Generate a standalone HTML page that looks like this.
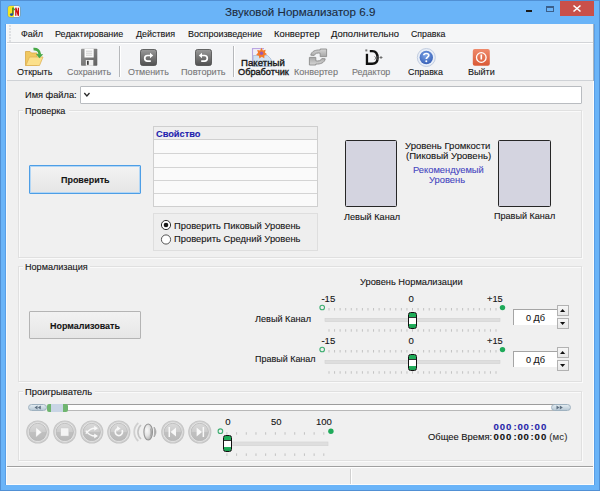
<!DOCTYPE html>
<html><head><meta charset="utf-8"><style>
html,body{margin:0;padding:0;width:600px;height:491px;overflow:hidden;background:#f0f0f0;}
.t{position:absolute;font-family:"Liberation Sans",sans-serif;white-space:pre;-webkit-text-stroke:0.1px currentColor;}
.a{position:absolute;box-sizing:border-box;}
svg{position:absolute;overflow:visible;}
</style></head><body>
<!-- window frame -->
<div class="a" style="left:0;top:0;width:600px;height:491px;background:#6ab4f8;border:1px solid #5190d4;"></div>
<div class="a" style="left:5px;top:24px;width:1px;height:461px;background:#5a9fe6;"></div><div class="a" style="left:594px;top:24px;width:1px;height:461px;background:#5a9fe6;"></div>
<!-- client -->
<div class="a" style="left:6px;top:24px;width:588px;height:461px;background:#f0f0f0;"></div>
<div class="a" style="left:6px;top:24px;width:1px;height:461px;background:#fbfbfb;"></div>
<div class="a" style="left:593px;top:24px;width:1px;height:57px;background:#a8b4c0;"></div><div class="a" style="left:593px;top:81px;width:1px;height:404px;background:#fdfdfd;"></div><div class="a" style="left:6px;top:484px;width:588px;height:1px;background:#fbfbfb;"></div>
<!-- app icon -->
<div class="a" style="left:8px;top:6px;width:12px;height:11px;border-radius:2px;background:linear-gradient(90deg,#f4e418 0,#f8ec30 50%,#f6f6f6 50%);box-shadow:0 0 0 0.5px rgba(150,120,40,0.5);"></div>
<svg style="left:8px;top:6px" width="12" height="11"><path d="M4.9 1.5 L4.9 8.3" stroke="#264a20" stroke-width="1.1"/><ellipse cx="3.6" cy="8.6" rx="1.7" ry="1.3" fill="#1f4ea0"/><path d="M5 1.8 L6.6 4.2" stroke="#3a9a3a" stroke-width="1.5"/><path d="M7.8 9.8 L7.8 1.8 L10.4 9.8 L10.4 1.8" stroke="#cc1010" stroke-width="1.25" fill="none"/></svg>
<!-- window buttons -->
<div class="a" style="left:526px;top:10px;width:6px;height:2px;background:#1a1a1a;"></div>
<div class="a" style="left:546px;top:6px;width:8px;height:6px;border:1px solid #3b5f8a;border-top-width:2px;"></div>
<div class="a" style="left:560px;top:1px;width:34px;height:15px;background:#c9504a;"></div>
<svg style="left:560px;top:1px" width="34" height="15"><path d="M13.5 4.5 L20.5 10.5 M20.5 4.5 L13.5 10.5" stroke="#fff" stroke-width="1.6"/></svg>

<!-- menubar -->
<div class="a" style="left:7px;top:24px;width:586px;height:18px;background:#f5f6f7;"></div>
<svg style="left:9px;top:24px" width="3" height="18"><g fill="#9aa0a8"><rect x="0.5" y="1.5" width="1" height="1"/><rect x="0.5" y="4.5" width="1" height="1"/><rect x="0.5" y="7.5" width="1" height="1"/><rect x="0.5" y="10.5" width="1" height="1"/><rect x="0.5" y="13.5" width="1" height="1"/><rect x="0.5" y="16.5" width="1" height="1"/></g></svg>
<div class="a" style="left:7px;top:42px;width:586px;height:1px;background:#d2d4d8;"></div>
<div class="a" style="left:7px;top:43px;width:586px;height:1px;background:#ffffff;"></div>
<!-- toolbar -->
<div class="a" style="left:7px;top:44px;width:586px;height:36px;background:#f3f4f6;"></div>
<div class="a" style="left:7px;top:80px;width:586px;height:1px;background:#cfd2d6;"></div>
<div class="a" style="left:118.6px;top:46px;width:1.2px;height:31px;background:#b6b8bb;"></div>
<div class="a" style="left:119.8px;top:46px;width:1px;height:31px;background:#fff;"></div>
<div class="a" style="left:232.6px;top:46px;width:1.2px;height:31px;background:#b6b8bb;"></div>
<div class="a" style="left:233.8px;top:46px;width:1px;height:31px;background:#fff;"></div>

<!-- filename box -->
<div class="a" style="left:80px;top:85.5px;width:501.5px;height:18.5px;background:#fff;border:1px solid #b9bcc0;border-radius:1px;"></div>
<svg style="left:80px;top:85px" width="12" height="18"><path d="M4.3 8 L6.9 11 L9.5 8" stroke="#2a2a2a" stroke-width="1.3" fill="none"/></svg>

<!-- group boxes -->
<div class="a" style="left:18px;top:110px;width:563.5px;height:148px;border:1px solid #e0e0e0;box-shadow:inset 1px 1px 0 #fafafa, 1px 1px 0 #fafafa;"></div>
<div class="a" style="left:23px;top:104px;width:46px;height:12px;background:#f0f0f0;"></div>
<div class="a" style="left:18px;top:266px;width:563.5px;height:116px;border:1px solid #e0e0e0;box-shadow:inset 1px 1px 0 #fafafa, 1px 1px 0 #fafafa;"></div>
<div class="a" style="left:23px;top:260px;width:67px;height:12px;background:#f0f0f0;"></div>
<div class="a" style="left:18px;top:391px;width:563.5px;height:70px;border:1px solid #e0e0e0;box-shadow:inset 1px 1px 0 #fafafa, 1px 1px 0 #fafafa;"></div>
<div class="a" style="left:23px;top:385px;width:72px;height:12px;background:#f0f0f0;"></div>

<!-- Проверить button -->
<div class="a" style="left:29px;top:165px;width:112px;height:29px;border:1px solid #4d9ee6;background:linear-gradient(#f3f3f3,#e5e5e5);border-radius:1px;box-shadow:inset 0 0 0 1px #b2d6f5;"></div>
<!-- table -->
<div class="a" style="left:152.5px;top:126px;width:165.5px;height:81px;border:1px solid #cfcfcf;background:#fafafa;"></div>
<div class="a" style="left:153.5px;top:127px;width:163.5px;height:12.5px;background:#efefef;"></div>
<div class="a" style="left:153.5px;top:139px;width:163.5px;height:1px;background:#d0d0d0;"></div>
<div class="a" style="left:153.5px;top:153px;width:163.5px;height:1px;background:#d4d4d4;"></div>
<div class="a" style="left:153.5px;top:166.5px;width:163.5px;height:1px;background:#d4d4d4;"></div>
<div class="a" style="left:153.5px;top:180px;width:163.5px;height:1px;background:#d4d4d4;"></div>
<div class="a" style="left:153.5px;top:193px;width:163.5px;height:1px;background:#d4d4d4;"></div>
<!-- radio group -->
<div class="a" style="left:152.5px;top:213px;width:165.5px;height:37.5px;border:1px solid #dedede;background:#eeeeee;"></div>
<svg style="left:160px;top:219px" width="14" height="28">
 <circle cx="6" cy="6" r="4.6" fill="#fff" stroke="#333" stroke-width="1"/><circle cx="6" cy="6" r="2.3" fill="#1a1a1a"/>
 <circle cx="6" cy="20.5" r="4.6" fill="#fff" stroke="#555" stroke-width="1"/>
</svg>
<!-- meters -->
<div class="a" style="left:345px;top:139.6px;width:52px;height:67.2px;border:1.4px solid #262626;border-radius:1.5px;background:#d4d4e0;"></div>
<div class="a" style="left:498px;top:139.6px;width:52.5px;height:67.2px;border:1.4px solid #262626;border-radius:1.5px;background:#d4d4e0;"></div>

<!-- Нормализовать button -->
<div class="a" style="left:29px;top:311px;width:112px;height:28px;border:1px solid #b4b4b4;background:linear-gradient(#f2f2f2,#e6e6e6);border-radius:1px;"></div>

<!-- status bar -->
<div class="a" style="left:7px;top:466px;width:586px;height:1px;background:#a0a0a0;"></div>
<div class="a" style="left:7px;top:467px;width:586px;height:1px;background:#fff;"></div>
<div class="a" style="left:350px;top:469px;width:1px;height:15px;background:#d0d0d0;"></div>
<div class="a" style="left:351px;top:469px;width:1px;height:15px;background:#fff;"></div>
<svg style="left:24px;top:46px" width="22" height="22">
<path d="M1.5 5.5 L6 5.5 L7.5 7 L13 7 L13 19.5 L1.5 19.5Z" fill="#f0c860" stroke="#d8a848" stroke-width="0.8"/>
<path d="M1.8 19.5 L5.5 11 L19 11 L15.5 19.5Z" fill="#fbe08c" stroke="#e0b458" stroke-width="0.8"/>
<path d="M9.5 3.2 C13 2.8 15.6 4.6 15.8 8.5" stroke="#46a846" stroke-width="2.8" fill="none"/>
<path d="M12 8 L19.2 8.2 L15.4 12.2Z" fill="#46a846"/>
</svg>
<svg style="left:80px;top:48px" width="19" height="19">
<defs><linearGradient id="fg" x1="0" y1="0" x2="1" y2="1"><stop offset="0" stop-color="#9a9a9a"/><stop offset="1" stop-color="#5e5e5e"/></linearGradient></defs>
<path d="M1 1.6 Q1 0.8 1.8 0.8 L16.5 0.8 Q17.3 0.8 17.3 1.6 L17.3 17 Q17.3 17.8 16.5 17.8 L1.8 17.8 Q1 17.8 1 17Z" fill="url(#fg)"/>
<rect x="4.5" y="0.8" width="9.2" height="8.7" fill="#fcfcfc"/>
<path d="M6 3.2 H12.2 M6 5.2 H12.2 M6 7.2 H12.2" stroke="#a8a8a8" stroke-width="0.55"/>
<rect x="5.8" y="12" width="7.5" height="5.8" fill="#f0f0f0"/>
<rect x="7" y="12.8" width="1.7" height="4" fill="#3c3c3c"/>
</svg>
<svg style="left:140px;top:49px" width="17" height="17">
<defs><linearGradient id="ug140" x1="0" y1="0" x2="0" y2="1"><stop offset="0" stop-color="#9a9a9a"/><stop offset="1" stop-color="#505050"/></linearGradient></defs>
<rect x="0.5" y="0.5" width="16" height="16" rx="2" fill="url(#ug140)" stroke="#4a4a4a" stroke-width="0.8"/>
<g ><path d="M10.5 6.5 L7.5 6.5 A2.8 2.8 0 0 0 7.5 12.1 L10.8 12.1" stroke="#fff" stroke-width="1.7" fill="none"/>
<path d="M10 3.8 L13.2 6.5 L10 9.2Z" fill="#fff"/></g>
</svg>
<svg style="left:195px;top:49px" width="17" height="17">
<defs><linearGradient id="ug195" x1="0" y1="0" x2="0" y2="1"><stop offset="0" stop-color="#9a9a9a"/><stop offset="1" stop-color="#505050"/></linearGradient></defs>
<rect x="0.5" y="0.5" width="16" height="16" rx="2" fill="url(#ug195)" stroke="#4a4a4a" stroke-width="0.8"/>
<g transform="translate(17,0) scale(-1,1)"><path d="M10.5 6.5 L7.5 6.5 A2.8 2.8 0 0 0 7.5 12.1 L10.8 12.1" stroke="#fff" stroke-width="1.7" fill="none"/>
<path d="M10 3.8 L13.2 6.5 L10 9.2Z" fill="#fff"/></g>
</svg>
<svg style="left:251px;top:47px" width="22" height="20">
<path d="M1.6 18 V1.6 H13" stroke="#bba6e2" stroke-width="1.3" fill="none"/>
<rect x="2.3" y="2.3" width="10" height="6" fill="#f1eef8"/>
<path d="M2.2 8.5 H16.5 L20 12 V19.5 H2.2Z" fill="#d0e1f3" stroke="#a9bcd6" stroke-width="0.8"/>
<g transform="translate(10.5,6.2) scale(1.08)"><path d="M0 -5 L1.3 -2.6 L3.9 -3.3 L3.2 -0.7 L5.2 1 L2.7 2 L2.6 4.6 L0.2 3.4 L-2 5 L-2.4 2.4 L-5 1.6 L-3.2 -0.4 L-4 -3 L-1.3 -2.6Z" fill="#f47a2a"/><circle r="1.6" fill="#9a5ab0"/></g>
</svg>
<svg style="left:308px;top:48px" width="20" height="18">
<defs><linearGradient id="cg" x1="0" y1="0" x2="0" y2="1"><stop offset="0" stop-color="#d6d6d6"/><stop offset="1" stop-color="#a6a6a6"/></linearGradient></defs>
<g id="carr"><path d="M2.8 7.2 C3.2 3.4 7.6 1.6 12.2 2 L12.2 1 L18.6 1 L18.6 8.6 L12.2 8.6 L12.2 5.2 C9.4 4.6 6.9 5.4 6.2 7.4 Z" fill="url(#cg)" stroke="#8c8c8c" stroke-width="0.9" stroke-linejoin="round"/></g>
<g transform="rotate(180 10 9)"><path d="M2.8 7.2 C3.2 3.4 7.6 1.6 12.2 2 L12.2 1 L18.6 1 L18.6 8.6 L12.2 8.6 L12.2 5.2 C9.4 4.6 6.9 5.4 6.2 7.4 Z" fill="url(#cg)" stroke="#8c8c8c" stroke-width="0.9" stroke-linejoin="round"/></g>
</svg>
<svg style="left:364px;top:48px" width="20" height="19">
<rect x="1.3" y="1.4" width="2" height="2" fill="#777"/>
<rect x="1.8" y="5.8" width="2.3" height="11.2" fill="#111"/>
<path d="M5.8 3.1 L8.2 3.1 C12.6 3.1 13.6 6.4 13.6 10 C13.6 14 11.8 15.8 8.2 15.8 L3.2 15.8" stroke="#111" stroke-width="2.4" fill="none"/>
<path d="M10.5 8.5 L14 11.5 M14 8.5 L10.5 11.5 M15.5 9.5 H18.5 M17 8 V11" stroke="#666" stroke-width="0.9"/>
</svg>
<svg style="left:416px;top:47px" width="21" height="21">
<defs><radialGradient id="hg" cx="45%" cy="35%" r="65%"><stop offset="0" stop-color="#79a2e6"/><stop offset="1" stop-color="#3a62b8"/></radialGradient></defs>
<circle cx="10.3" cy="10.5" r="9" fill="#e8eef8" stroke="#c2cde0" stroke-width="1"/>
<circle cx="10.3" cy="10.5" r="6.7" fill="url(#hg)"/>
<path d="M7.8 8.3 C7.8 5.9 12.8 5.9 12.8 8.3 C12.8 10 10.3 10.2 10.3 12" stroke="#fff" stroke-width="1.7" fill="none"/>
<circle cx="10.3" cy="14.2" r="1" fill="#fff"/>
</svg>
<svg style="left:472px;top:48px" width="19" height="19">
<defs><linearGradient id="eg" x1="0" y1="0" x2="0" y2="1"><stop offset="0" stop-color="#ef8a6c"/><stop offset="1" stop-color="#da5a36"/></linearGradient></defs>
<rect x="0.8" y="1" width="17" height="16.7" rx="2" fill="url(#eg)"/>
<circle cx="9.3" cy="9.5" r="4.8" stroke="#fff" stroke-width="1.3" fill="none"/>
<rect x="8.5" y="6.5" width="1.6" height="5" fill="#fff"/>
</svg><svg style="left:0;top:0" width="600" height="491"><circle cx="322.2" cy="307.5" r="2.3" fill="none" stroke="#3fae72" stroke-width="1.1"/><circle cx="502.5" cy="307.6" r="2.7" fill="#1faa5a"/><rect x="328.50" y="308" width="1" height="2.5" fill="#c2c2c2"/><rect x="328.50" y="329.2" width="1" height="2.5" fill="#c2c2c2"/><rect x="334.07" y="308" width="1" height="2.5" fill="#c2c2c2"/><rect x="334.07" y="329.2" width="1" height="2.5" fill="#c2c2c2"/><rect x="339.63" y="308" width="1" height="2.5" fill="#c2c2c2"/><rect x="339.63" y="329.2" width="1" height="2.5" fill="#c2c2c2"/><rect x="345.20" y="308" width="1" height="2.5" fill="#c2c2c2"/><rect x="345.20" y="329.2" width="1" height="2.5" fill="#c2c2c2"/><rect x="350.77" y="308" width="1" height="2.5" fill="#c2c2c2"/><rect x="350.77" y="329.2" width="1" height="2.5" fill="#c2c2c2"/><rect x="356.33" y="308" width="1" height="2.5" fill="#c2c2c2"/><rect x="356.33" y="329.2" width="1" height="2.5" fill="#c2c2c2"/><rect x="361.90" y="308" width="1" height="2.5" fill="#c2c2c2"/><rect x="361.90" y="329.2" width="1" height="2.5" fill="#c2c2c2"/><rect x="367.47" y="308" width="1" height="2.5" fill="#c2c2c2"/><rect x="367.47" y="329.2" width="1" height="2.5" fill="#c2c2c2"/><rect x="373.04" y="308" width="1" height="2.5" fill="#c2c2c2"/><rect x="373.04" y="329.2" width="1" height="2.5" fill="#c2c2c2"/><rect x="378.60" y="308" width="1" height="2.5" fill="#c2c2c2"/><rect x="378.60" y="329.2" width="1" height="2.5" fill="#c2c2c2"/><rect x="384.17" y="308" width="1" height="2.5" fill="#c2c2c2"/><rect x="384.17" y="329.2" width="1" height="2.5" fill="#c2c2c2"/><rect x="389.74" y="308" width="1" height="2.5" fill="#c2c2c2"/><rect x="389.74" y="329.2" width="1" height="2.5" fill="#c2c2c2"/><rect x="395.30" y="308" width="1" height="2.5" fill="#c2c2c2"/><rect x="395.30" y="329.2" width="1" height="2.5" fill="#c2c2c2"/><rect x="400.87" y="308" width="1" height="2.5" fill="#c2c2c2"/><rect x="400.87" y="329.2" width="1" height="2.5" fill="#c2c2c2"/><rect x="406.44" y="308" width="1" height="2.5" fill="#c2c2c2"/><rect x="406.44" y="329.2" width="1" height="2.5" fill="#c2c2c2"/><rect x="412.00" y="308" width="1" height="2.5" fill="#c2c2c2"/><rect x="412.00" y="329.2" width="1" height="2.5" fill="#c2c2c2"/><rect x="417.57" y="308" width="1" height="2.5" fill="#c2c2c2"/><rect x="417.57" y="329.2" width="1" height="2.5" fill="#c2c2c2"/><rect x="423.14" y="308" width="1" height="2.5" fill="#c2c2c2"/><rect x="423.14" y="329.2" width="1" height="2.5" fill="#c2c2c2"/><rect x="428.71" y="308" width="1" height="2.5" fill="#c2c2c2"/><rect x="428.71" y="329.2" width="1" height="2.5" fill="#c2c2c2"/><rect x="434.27" y="308" width="1" height="2.5" fill="#c2c2c2"/><rect x="434.27" y="329.2" width="1" height="2.5" fill="#c2c2c2"/><rect x="439.84" y="308" width="1" height="2.5" fill="#c2c2c2"/><rect x="439.84" y="329.2" width="1" height="2.5" fill="#c2c2c2"/><rect x="445.41" y="308" width="1" height="2.5" fill="#c2c2c2"/><rect x="445.41" y="329.2" width="1" height="2.5" fill="#c2c2c2"/><rect x="450.97" y="308" width="1" height="2.5" fill="#c2c2c2"/><rect x="450.97" y="329.2" width="1" height="2.5" fill="#c2c2c2"/><rect x="456.54" y="308" width="1" height="2.5" fill="#c2c2c2"/><rect x="456.54" y="329.2" width="1" height="2.5" fill="#c2c2c2"/><rect x="462.11" y="308" width="1" height="2.5" fill="#c2c2c2"/><rect x="462.11" y="329.2" width="1" height="2.5" fill="#c2c2c2"/><rect x="467.68" y="308" width="1" height="2.5" fill="#c2c2c2"/><rect x="467.68" y="329.2" width="1" height="2.5" fill="#c2c2c2"/><rect x="473.24" y="308" width="1" height="2.5" fill="#c2c2c2"/><rect x="473.24" y="329.2" width="1" height="2.5" fill="#c2c2c2"/><rect x="478.81" y="308" width="1" height="2.5" fill="#c2c2c2"/><rect x="478.81" y="329.2" width="1" height="2.5" fill="#c2c2c2"/><rect x="484.38" y="308" width="1" height="2.5" fill="#c2c2c2"/><rect x="484.38" y="329.2" width="1" height="2.5" fill="#c2c2c2"/><rect x="489.94" y="308" width="1" height="2.5" fill="#c2c2c2"/><rect x="489.94" y="329.2" width="1" height="2.5" fill="#c2c2c2"/><rect x="495.51" y="308" width="1" height="2.5" fill="#c2c2c2"/><rect x="495.51" y="329.2" width="1" height="2.5" fill="#c2c2c2"/><rect x="325" y="318.3" width="175" height="3.4" fill="#dedede" stroke="#d2d2d2" stroke-width="0.6"/></svg>
<div class="a" style="left:408px;top:311.6px;width:9px;height:17.5px;border:1px solid #111;border-radius:2.6px;background:linear-gradient(#1ca854 0,#22b05c 4px,#333 4px,#333 4.8px,#fff 4.8px,#fff 10.7px,#333 10.7px,#333 11.5px,#22b05c 11.5px,#1a9e50 100%);"></div>
<div class="a" style="left:513px;top:308.8px;width:43.5px;height:16.5px;background:#fff;border-top:1.5px solid #a5a5a5;border-left:1.5px solid #a5a5a5;"></div>
<div class="a" style="left:557.3px;top:304.7px;width:11.7px;height:11.7px;border:1px solid #b2b2b2;background:linear-gradient(#f6f6f6,#e8e8e8);"></div>
<svg style="left:560.4px;top:309.0px" width="6" height="4"><path d="M0 3 L2.6 0 L5.2 3Z" fill="#111"/></svg>
<div class="a" style="left:557.3px;top:317.7px;width:11.7px;height:11.7px;border:1px solid #b2b2b2;background:linear-gradient(#f6f6f6,#e8e8e8);"></div>
<svg style="left:560.4px;top:322.0px" width="6" height="4"><path d="M0 0 L2.6 3 L5.2 0Z" fill="#111"/></svg>
<svg style="left:0;top:0" width="600" height="491"><circle cx="322.2" cy="349.5" r="2.3" fill="none" stroke="#3fae72" stroke-width="1.1"/><circle cx="502.5" cy="349.6" r="2.7" fill="#1faa5a"/><rect x="328.50" y="350" width="1" height="2.5" fill="#c2c2c2"/><rect x="328.50" y="371.2" width="1" height="2.5" fill="#c2c2c2"/><rect x="334.07" y="350" width="1" height="2.5" fill="#c2c2c2"/><rect x="334.07" y="371.2" width="1" height="2.5" fill="#c2c2c2"/><rect x="339.63" y="350" width="1" height="2.5" fill="#c2c2c2"/><rect x="339.63" y="371.2" width="1" height="2.5" fill="#c2c2c2"/><rect x="345.20" y="350" width="1" height="2.5" fill="#c2c2c2"/><rect x="345.20" y="371.2" width="1" height="2.5" fill="#c2c2c2"/><rect x="350.77" y="350" width="1" height="2.5" fill="#c2c2c2"/><rect x="350.77" y="371.2" width="1" height="2.5" fill="#c2c2c2"/><rect x="356.33" y="350" width="1" height="2.5" fill="#c2c2c2"/><rect x="356.33" y="371.2" width="1" height="2.5" fill="#c2c2c2"/><rect x="361.90" y="350" width="1" height="2.5" fill="#c2c2c2"/><rect x="361.90" y="371.2" width="1" height="2.5" fill="#c2c2c2"/><rect x="367.47" y="350" width="1" height="2.5" fill="#c2c2c2"/><rect x="367.47" y="371.2" width="1" height="2.5" fill="#c2c2c2"/><rect x="373.04" y="350" width="1" height="2.5" fill="#c2c2c2"/><rect x="373.04" y="371.2" width="1" height="2.5" fill="#c2c2c2"/><rect x="378.60" y="350" width="1" height="2.5" fill="#c2c2c2"/><rect x="378.60" y="371.2" width="1" height="2.5" fill="#c2c2c2"/><rect x="384.17" y="350" width="1" height="2.5" fill="#c2c2c2"/><rect x="384.17" y="371.2" width="1" height="2.5" fill="#c2c2c2"/><rect x="389.74" y="350" width="1" height="2.5" fill="#c2c2c2"/><rect x="389.74" y="371.2" width="1" height="2.5" fill="#c2c2c2"/><rect x="395.30" y="350" width="1" height="2.5" fill="#c2c2c2"/><rect x="395.30" y="371.2" width="1" height="2.5" fill="#c2c2c2"/><rect x="400.87" y="350" width="1" height="2.5" fill="#c2c2c2"/><rect x="400.87" y="371.2" width="1" height="2.5" fill="#c2c2c2"/><rect x="406.44" y="350" width="1" height="2.5" fill="#c2c2c2"/><rect x="406.44" y="371.2" width="1" height="2.5" fill="#c2c2c2"/><rect x="412.00" y="350" width="1" height="2.5" fill="#c2c2c2"/><rect x="412.00" y="371.2" width="1" height="2.5" fill="#c2c2c2"/><rect x="417.57" y="350" width="1" height="2.5" fill="#c2c2c2"/><rect x="417.57" y="371.2" width="1" height="2.5" fill="#c2c2c2"/><rect x="423.14" y="350" width="1" height="2.5" fill="#c2c2c2"/><rect x="423.14" y="371.2" width="1" height="2.5" fill="#c2c2c2"/><rect x="428.71" y="350" width="1" height="2.5" fill="#c2c2c2"/><rect x="428.71" y="371.2" width="1" height="2.5" fill="#c2c2c2"/><rect x="434.27" y="350" width="1" height="2.5" fill="#c2c2c2"/><rect x="434.27" y="371.2" width="1" height="2.5" fill="#c2c2c2"/><rect x="439.84" y="350" width="1" height="2.5" fill="#c2c2c2"/><rect x="439.84" y="371.2" width="1" height="2.5" fill="#c2c2c2"/><rect x="445.41" y="350" width="1" height="2.5" fill="#c2c2c2"/><rect x="445.41" y="371.2" width="1" height="2.5" fill="#c2c2c2"/><rect x="450.97" y="350" width="1" height="2.5" fill="#c2c2c2"/><rect x="450.97" y="371.2" width="1" height="2.5" fill="#c2c2c2"/><rect x="456.54" y="350" width="1" height="2.5" fill="#c2c2c2"/><rect x="456.54" y="371.2" width="1" height="2.5" fill="#c2c2c2"/><rect x="462.11" y="350" width="1" height="2.5" fill="#c2c2c2"/><rect x="462.11" y="371.2" width="1" height="2.5" fill="#c2c2c2"/><rect x="467.68" y="350" width="1" height="2.5" fill="#c2c2c2"/><rect x="467.68" y="371.2" width="1" height="2.5" fill="#c2c2c2"/><rect x="473.24" y="350" width="1" height="2.5" fill="#c2c2c2"/><rect x="473.24" y="371.2" width="1" height="2.5" fill="#c2c2c2"/><rect x="478.81" y="350" width="1" height="2.5" fill="#c2c2c2"/><rect x="478.81" y="371.2" width="1" height="2.5" fill="#c2c2c2"/><rect x="484.38" y="350" width="1" height="2.5" fill="#c2c2c2"/><rect x="484.38" y="371.2" width="1" height="2.5" fill="#c2c2c2"/><rect x="489.94" y="350" width="1" height="2.5" fill="#c2c2c2"/><rect x="489.94" y="371.2" width="1" height="2.5" fill="#c2c2c2"/><rect x="495.51" y="350" width="1" height="2.5" fill="#c2c2c2"/><rect x="495.51" y="371.2" width="1" height="2.5" fill="#c2c2c2"/><rect x="325" y="360.3" width="175" height="3.4" fill="#dedede" stroke="#d2d2d2" stroke-width="0.6"/></svg>
<div class="a" style="left:408px;top:353.6px;width:9px;height:17.5px;border:1px solid #111;border-radius:2.6px;background:linear-gradient(#1ca854 0,#22b05c 4px,#333 4px,#333 4.8px,#fff 4.8px,#fff 10.7px,#333 10.7px,#333 11.5px,#22b05c 11.5px,#1a9e50 100%);"></div>
<div class="a" style="left:513px;top:350.8px;width:43.5px;height:16.5px;background:#fff;border-top:1.5px solid #a5a5a5;border-left:1.5px solid #a5a5a5;"></div>
<div class="a" style="left:557.3px;top:346.7px;width:11.7px;height:11.7px;border:1px solid #b2b2b2;background:linear-gradient(#f6f6f6,#e8e8e8);"></div>
<svg style="left:560.4px;top:351.0px" width="6" height="4"><path d="M0 3 L2.6 0 L5.2 3Z" fill="#111"/></svg>
<div class="a" style="left:557.3px;top:359.7px;width:11.7px;height:11.7px;border:1px solid #b2b2b2;background:linear-gradient(#f6f6f6,#e8e8e8);"></div>
<svg style="left:560.4px;top:364.0px" width="6" height="4"><path d="M0 0 L2.6 3 L5.2 0Z" fill="#111"/></svg>
<svg style="left:0;top:0" width="600" height="491"><circle cx="220.4" cy="431.2" r="2.3" fill="none" stroke="#3fae72" stroke-width="1.1"/><circle cx="330.9" cy="431.2" r="2.7" fill="#1faa5a"/><rect x="226.40" y="432.2" width="1" height="2.5" fill="#c2c2c2"/><rect x="226.40" y="453.4" width="1" height="2.5" fill="#c2c2c2"/><rect x="236.09" y="432.2" width="1" height="2.5" fill="#c2c2c2"/><rect x="236.09" y="453.4" width="1" height="2.5" fill="#c2c2c2"/><rect x="245.78" y="432.2" width="1" height="2.5" fill="#c2c2c2"/><rect x="245.78" y="453.4" width="1" height="2.5" fill="#c2c2c2"/><rect x="255.47" y="432.2" width="1" height="2.5" fill="#c2c2c2"/><rect x="255.47" y="453.4" width="1" height="2.5" fill="#c2c2c2"/><rect x="265.16" y="432.2" width="1" height="2.5" fill="#c2c2c2"/><rect x="265.16" y="453.4" width="1" height="2.5" fill="#c2c2c2"/><rect x="274.85" y="432.2" width="1" height="2.5" fill="#c2c2c2"/><rect x="274.85" y="453.4" width="1" height="2.5" fill="#c2c2c2"/><rect x="284.54" y="432.2" width="1" height="2.5" fill="#c2c2c2"/><rect x="284.54" y="453.4" width="1" height="2.5" fill="#c2c2c2"/><rect x="294.23" y="432.2" width="1" height="2.5" fill="#c2c2c2"/><rect x="294.23" y="453.4" width="1" height="2.5" fill="#c2c2c2"/><rect x="303.92" y="432.2" width="1" height="2.5" fill="#c2c2c2"/><rect x="303.92" y="453.4" width="1" height="2.5" fill="#c2c2c2"/><rect x="313.61" y="432.2" width="1" height="2.5" fill="#c2c2c2"/><rect x="313.61" y="453.4" width="1" height="2.5" fill="#c2c2c2"/><rect x="323.30" y="432.2" width="1" height="2.5" fill="#c2c2c2"/><rect x="323.30" y="453.4" width="1" height="2.5" fill="#c2c2c2"/><rect x="231.7" y="442" width="96.3" height="3.7" fill="#dedede" stroke="#d2d2d2" stroke-width="0.6"/></svg>
<div class="a" style="left:223px;top:434.9px;width:9px;height:17.5px;border:1px solid #111;border-radius:2.6px;background:linear-gradient(#1ca854 0,#22b05c 4px,#333 4px,#333 4.8px,#fff 4.8px,#fff 10.7px,#333 10.7px,#333 11.5px,#22b05c 11.5px,#1a9e50 100%);"></div>
<div class="a" style="left:60px;top:403.8px;width:495px;height:7px;background:#fdfdfd;border-top:1.5px solid #9c9c9c;border-bottom:1.5px solid #b8b8b8;"></div>
<div class="a" style="left:28px;top:404px;width:19px;height:7px;border-radius:3.5px;background:linear-gradient(#e2ebf1,#b9cad6);border:0.5px solid #9fb2c0;"></div>
<svg style="left:34px;top:405px" width="10" height="5"><path d="M0.5 2.5 L3.5 0.5 L3.5 4.5Z M3.8 2.5 L6.8 0.5 L6.8 4.5Z" fill="#5d6f80"/></svg>
<div class="a" style="left:46.5px;top:403.5px;width:21px;height:8px;border-radius:2px;background:linear-gradient(90deg,#6fb56f 0,#6fb56f 4.5px,#c9d5e5 4.5px,#c9d5e5 16.5px,#6fb56f 16.5px);"></div>
<div class="a" style="left:551px;top:404px;width:20px;height:7px;border-radius:3.5px;background:linear-gradient(#e2ebf1,#b9cad6);border:0.5px solid #9fb2c0;"></div>
<svg style="left:556px;top:405px" width="10" height="5"><path d="M0.5 0.5 L3.5 2.5 L0.5 4.5Z M3.8 0.5 L6.8 2.5 L3.8 4.5Z" fill="#5d6f80"/></svg>
<svg style="left:0;top:0" width="600" height="491"><defs><linearGradient id="bg1" x1="0" y1="0" x2="0" y2="1"><stop offset="0" stop-color="#dadada"/><stop offset="0.48" stop-color="#cdcdcd"/><stop offset="0.52" stop-color="#c0c0c0"/><stop offset="1" stop-color="#bababa"/></linearGradient><linearGradient id="ring" x1="0" y1="0" x2="0" y2="1"><stop offset="0" stop-color="#c6c6c6"/><stop offset="1" stop-color="#b8b8b8"/></linearGradient><radialGradient id="spk" cx="35%" cy="40%" r="70%"><stop offset="0" stop-color="#fafafa"/><stop offset="0.5" stop-color="#e2e2e2"/><stop offset="1" stop-color="#a8a8a8"/></radialGradient></defs><g transform="translate(37.8,432)"><circle r="11.6" fill="#c4c4c4"/><circle r="10.7" fill="#d2d2d2"/><circle r="9.7" fill="#ececec"/><circle r="8.7" fill="url(#bg1)" stroke="#b2b2b2" stroke-width="0.7"/><path d="M-1.8 -4.6 L3.8 0.3 L-1.8 5Z" fill="#fafafa" stroke="#d0d0d0" stroke-width="0.4"/></g><g transform="translate(64.8,432)"><circle r="11.6" fill="#c4c4c4"/><circle r="10.7" fill="#d2d2d2"/><circle r="9.7" fill="#ececec"/><circle r="8.7" fill="url(#bg1)" stroke="#b2b2b2" stroke-width="0.7"/><rect x="-4" y="-4" width="8" height="8" fill="#f4f4f4" stroke="#c8c8c8" stroke-width="0.4"/></g><g transform="translate(91.8,432)"><circle r="11.6" fill="#c4c4c4"/><circle r="10.7" fill="#d2d2d2"/><circle r="9.7" fill="#ececec"/><circle r="8.7" fill="url(#bg1)" stroke="#b2b2b2" stroke-width="0.7"/><path d="M-6 1.6 C-3.5 -1.8 -0.5 -3.8 3.2 -3.8 M-6 -1.4 C-3.5 2 -0.5 4.1 3.2 4.1" stroke="#f8f8f8" stroke-width="1.5" fill="none"/><path d="M2.4 -6.3 L6.2 -3.8 L2.4 -1.3Z M2.4 1.6 L6.2 4.1 L2.4 6.6Z" fill="#f8f8f8"/></g><g transform="translate(118.8,432)"><circle r="11.6" fill="#c4c4c4"/><circle r="10.7" fill="#d2d2d2"/><circle r="9.7" fill="#ececec"/><circle r="8.7" fill="url(#bg1)" stroke="#b2b2b2" stroke-width="0.7"/><path d="M3.2 -1.8 A3.6 3.6 0 1 1 -0.8 -3.5" stroke="#f8f8f8" stroke-width="1.7" fill="none"/><path d="M-1.8 -6 L1.8 -3.4 L-1.6 -0.9Z" fill="#f8f8f8"/></g><g transform="translate(145.8,432)"><path d="M-7.5 -9 A12 12 0 0 0 -7.5 9" stroke="#d0d0d0" stroke-width="1.8" fill="none"/><path d="M-4.8 -7 A9.5 9.5 0 0 0 -4.8 7" stroke="#c4c4c4" stroke-width="1.6" fill="none"/><ellipse cx="2.4" cy="0" rx="4.3" ry="8" fill="url(#spk)" stroke="#969696" stroke-width="1.1"/><path d="M4.2 -4 C6.5 -1.5 6.5 2.5 4.2 5 C5.2 2 5 -1 4.2 -4Z" fill="#9a9a9a"/><path d="M8.2 -5 C10.8 -2 10.8 2 8.2 5 C9 2 9 -2 8.2 -5Z" fill="#a0a0a0" stroke="#a8a8a8" stroke-width="0.8"/></g><g transform="translate(172.8,432)"><circle r="11.6" fill="#c4c4c4"/><circle r="10.7" fill="#d2d2d2"/><circle r="9.7" fill="#ececec"/><circle r="8.7" fill="url(#bg1)" stroke="#b2b2b2" stroke-width="0.7"/><rect x="-4.3" y="-5" width="1.5" height="10" fill="#f8f8f8"/><path d="M3.2 -4.6 L-2.2 0 L3.2 4.6Z" fill="#f8f8f8"/></g><g transform="translate(199.8,432)"><circle r="11.6" fill="#c4c4c4"/><circle r="10.7" fill="#d2d2d2"/><circle r="9.7" fill="#ececec"/><circle r="8.7" fill="url(#bg1)" stroke="#b2b2b2" stroke-width="0.7"/><rect x="2.8" y="-5" width="1.5" height="10" fill="#f8f8f8"/><path d="M-3.2 -4.6 L2.2 0 L-3.2 4.6Z" fill="#f8f8f8"/></g></svg>
<div class="t" style="left:224.80px;top:6.38px;font-size:11.6px;line-height:11.6px;color:#1d2b3c;letter-spacing:0.000px;transform:scaleX(0.9998);transform-origin:0 0;">Звуковой Нормализатор 6.9</div><div class="t" style="left:20.50px;top:28.67px;font-size:9.6px;line-height:9.6px;color:#141414;letter-spacing:0.000px;transform:scaleX(0.9353);transform-origin:0 0;">Файл</div><div class="t" style="left:55.00px;top:28.67px;font-size:9.6px;line-height:9.6px;color:#141414;letter-spacing:0.000px;transform:scaleX(0.9348);transform-origin:0 0;">Редактирование</div><div class="t" style="left:135.50px;top:28.67px;font-size:9.6px;line-height:9.6px;color:#141414;letter-spacing:0.000px;transform:scaleX(0.9322);transform-origin:0 0;">Действия</div><div class="t" style="left:188.00px;top:28.67px;font-size:9.6px;line-height:9.6px;color:#141414;letter-spacing:0.000px;transform:scaleX(0.9384);transform-origin:0 0;">Воспроизведение</div><div class="t" style="left:274.00px;top:28.67px;font-size:9.6px;line-height:9.6px;color:#141414;letter-spacing:0.000px;transform:scaleX(0.9785);transform-origin:0 0;">Конвертер</div><div class="t" style="left:330.70px;top:28.67px;font-size:9.6px;line-height:9.6px;color:#141414;letter-spacing:0.000px;transform:scaleX(0.9838);transform-origin:0 0;">Дополнительно</div><div class="t" style="left:411.00px;top:28.67px;font-size:9.6px;line-height:9.6px;color:#141414;letter-spacing:0.000px;transform:scaleX(0.9139);transform-origin:0 0;">Справка</div><div class="t" style="left:17.00px;top:66.87px;font-size:9.6px;line-height:9.6px;color:#141414;letter-spacing:0.000px;transform:scaleX(0.9395);transform-origin:0 0;">Открыть</div><div class="t" style="left:67.00px;top:66.87px;font-size:9.6px;line-height:9.6px;color:#767676;letter-spacing:0.000px;transform:scaleX(0.9229);transform-origin:0 0;">Сохранить</div><div class="t" style="left:127.60px;top:66.87px;font-size:9.6px;line-height:9.6px;color:#767676;letter-spacing:0.000px;transform:scaleX(0.9307);transform-origin:0 0;">Отменить</div><div class="t" style="left:181.00px;top:66.87px;font-size:9.6px;line-height:9.6px;color:#767676;letter-spacing:0.000px;transform:scaleX(0.9524);transform-origin:0 0;">Повторить</div><div class="t" style="left:241.00px;top:58.07px;font-size:9.6px;line-height:9.6px;color:#141414;letter-spacing:0.037px;-webkit-text-stroke:0.35px #141414;">Пакетный</div><div class="t" style="left:238.00px;top:66.77px;font-size:9.6px;line-height:9.6px;color:#141414;letter-spacing:0.000px;transform:scaleX(0.9556);transform-origin:0 0;-webkit-text-stroke:0.35px #141414;">Обработчик</div><div class="t" style="left:294.40px;top:66.87px;font-size:9.6px;line-height:9.6px;color:#767676;letter-spacing:0.000px;transform:scaleX(0.9418);transform-origin:0 0;">Конвертер</div><div class="t" style="left:352.00px;top:66.87px;font-size:9.6px;line-height:9.6px;color:#767676;letter-spacing:0.000px;transform:scaleX(0.9277);transform-origin:0 0;">Редактор</div><div class="t" style="left:408.00px;top:66.87px;font-size:9.6px;line-height:9.6px;color:#141414;letter-spacing:0.000px;transform:scaleX(0.9269);transform-origin:0 0;">Справка</div><div class="t" style="left:467.50px;top:66.87px;font-size:9.6px;line-height:9.6px;color:#141414;letter-spacing:0.000px;transform:scaleX(0.9448);transform-origin:0 0;">Выйти</div><div class="t" style="left:25.00px;top:89.87px;font-size:9.6px;line-height:9.6px;color:#141414;letter-spacing:0.000px;transform:scaleX(0.9646);transform-origin:0 0;">Имя файла:</div><div class="t" style="left:25.00px;top:105.87px;font-size:9.6px;line-height:9.6px;color:#141414;letter-spacing:0.000px;transform:scaleX(0.9396);transform-origin:0 0;">Проверка</div><div class="t" style="left:24.70px;top:262.17px;font-size:9.6px;line-height:9.6px;color:#141414;letter-spacing:0.000px;transform:scaleX(0.9474);transform-origin:0 0;">Нормализация</div><div class="t" style="left:24.70px;top:386.87px;font-size:9.6px;line-height:9.6px;color:#141414;letter-spacing:0.000px;transform:scaleX(0.9771);transform-origin:0 0;">Проигрыватель</div><div class="t" style="left:60.80px;top:175.07px;font-size:9.6px;line-height:9.6px;color:#141414;letter-spacing:0.000px;transform:scaleX(0.9314);transform-origin:0 0;font-weight:bold;">Проверить</div><div class="t" style="left:156.20px;top:128.96px;font-size:9.5px;line-height:9.5px;color:#1e1eae;letter-spacing:0.000px;transform:scaleX(0.9723);transform-origin:0 0;font-weight:bold;">Свойство</div><div class="t" style="left:173.70px;top:220.57px;font-size:9.6px;line-height:9.6px;color:#141414;letter-spacing:0.000px;transform:scaleX(0.9767);transform-origin:0 0;">Проверить Пиковый Уровень</div><div class="t" style="left:173.70px;top:234.37px;font-size:9.6px;line-height:9.6px;color:#141414;letter-spacing:0.000px;transform:scaleX(0.9786);transform-origin:0 0;">Проверить Средний Уровень</div><div class="t" style="left:404.50px;top:141.17px;font-size:9.6px;line-height:9.6px;color:#141414;letter-spacing:0.000px;transform:scaleX(0.9956);transform-origin:0 0;">Уровень Громкости</div><div class="t" style="left:406.40px;top:151.27px;font-size:9.6px;line-height:9.6px;color:#141414;letter-spacing:0.000px;transform:scaleX(0.9981);transform-origin:0 0;">(Пиковый Уровень)</div><div class="t" style="left:413.00px;top:164.97px;font-size:9.6px;line-height:9.6px;color:#4646c0;letter-spacing:0.000px;transform:scaleX(0.9738);transform-origin:0 0;">Рекомендуемый</div><div class="t" style="left:428.60px;top:175.47px;font-size:9.6px;line-height:9.6px;color:#4646c0;letter-spacing:0.000px;transform:scaleX(0.9768);transform-origin:0 0;">Уровень</div><div class="t" style="left:343.60px;top:211.87px;font-size:9.6px;line-height:9.6px;color:#141414;letter-spacing:0.000px;transform:scaleX(0.9552);transform-origin:0 0;">Левый Канал</div><div class="t" style="left:493.60px;top:211.47px;font-size:9.6px;line-height:9.6px;color:#141414;letter-spacing:0.000px;transform:scaleX(0.9448);transform-origin:0 0;">Правый Канал</div><div class="t" style="left:50.30px;top:320.57px;font-size:9.6px;line-height:9.6px;color:#141414;letter-spacing:0.000px;transform:scaleX(0.9331);transform-origin:0 0;font-weight:bold;">Нормализовать</div><div class="t" style="left:360.40px;top:277.07px;font-size:9.6px;line-height:9.6px;color:#141414;letter-spacing:0.000px;transform:scaleX(0.9679);transform-origin:0 0;">Уровень Нормализации</div><div class="t" style="left:321.40px;top:294.27px;font-size:9.6px;line-height:9.6px;color:#141414;letter-spacing:0.035px;">-15</div><div class="t" style="left:408.50px;top:294.27px;font-size:9.6px;line-height:9.6px;color:#141414;letter-spacing:-0.300px;">0</div><div class="t" style="left:486.60px;top:294.27px;font-size:9.6px;line-height:9.6px;color:#141414;letter-spacing:0.000px;transform:scaleX(0.9662);transform-origin:0 0;">+15</div><div class="t" style="left:525.80px;top:312.87px;font-size:9.6px;line-height:9.6px;color:#141414;letter-spacing:0.000px;transform:scaleX(0.9513);transform-origin:0 0;">0 Дб</div><div class="t" style="left:321.40px;top:336.27px;font-size:9.6px;line-height:9.6px;color:#141414;letter-spacing:0.035px;">-15</div><div class="t" style="left:408.50px;top:336.27px;font-size:9.6px;line-height:9.6px;color:#141414;letter-spacing:-0.300px;">0</div><div class="t" style="left:486.60px;top:336.27px;font-size:9.6px;line-height:9.6px;color:#141414;letter-spacing:0.000px;transform:scaleX(0.9662);transform-origin:0 0;">+15</div><div class="t" style="left:525.80px;top:354.87px;font-size:9.6px;line-height:9.6px;color:#141414;letter-spacing:0.000px;transform:scaleX(0.9513);transform-origin:0 0;">0 Дб</div><div class="t" style="left:254.60px;top:314.27px;font-size:9.6px;line-height:9.6px;color:#141414;letter-spacing:0.000px;transform:scaleX(0.9518);transform-origin:0 0;">Левый Канал</div><div class="t" style="left:254.60px;top:353.87px;font-size:9.6px;line-height:9.6px;color:#141414;letter-spacing:0.000px;transform:scaleX(0.9354);transform-origin:0 0;">Правый Канал</div><div class="t" style="left:225.20px;top:417.07px;font-size:9.6px;line-height:9.6px;color:#141414;letter-spacing:0.400px;">0</div><div class="t" style="left:271.30px;top:417.07px;font-size:9.6px;line-height:9.6px;color:#141414;letter-spacing:0.000px;transform:scaleX(0.9869);transform-origin:0 0;">50</div><div class="t" style="left:316.20px;top:417.07px;font-size:9.6px;line-height:9.6px;color:#141414;letter-spacing:0.000px;transform:scaleX(0.9955);transform-origin:0 0;">100</div><div class="t" style="left:493.50px;top:421.87px;font-size:9.6px;line-height:9.6px;color:#2626aa;letter-spacing:0.914px;font-weight:bold;">000</div><div class="t" style="left:513.40px;top:421.87px;font-size:9.6px;line-height:9.6px;color:#2626aa;letter-spacing:-0.800px;font-weight:bold;">:</div><div class="t" style="left:517.50px;top:421.87px;font-size:9.6px;line-height:9.6px;color:#2626aa;letter-spacing:0.664px;font-weight:bold;">00</div><div class="t" style="left:530.40px;top:421.87px;font-size:9.6px;line-height:9.6px;color:#2626aa;letter-spacing:-0.800px;font-weight:bold;">:</div><div class="t" style="left:534.50px;top:421.87px;font-size:9.6px;line-height:9.6px;color:#2626aa;letter-spacing:1.164px;font-weight:bold;">00</div><div class="t" style="left:428.00px;top:432.37px;font-size:9.6px;line-height:9.6px;color:#141414;letter-spacing:0.000px;transform:scaleX(0.9778);transform-origin:0 0;">Общее Время:</div><div class="t" style="left:493.50px;top:432.17px;font-size:9.6px;line-height:9.6px;color:#111111;letter-spacing:0.914px;font-weight:bold;">000</div><div class="t" style="left:513.40px;top:432.17px;font-size:9.6px;line-height:9.6px;color:#111111;letter-spacing:-0.800px;font-weight:bold;">:</div><div class="t" style="left:517.50px;top:432.17px;font-size:9.6px;line-height:9.6px;color:#111111;letter-spacing:0.664px;font-weight:bold;">00</div><div class="t" style="left:530.40px;top:432.17px;font-size:9.6px;line-height:9.6px;color:#111111;letter-spacing:-0.800px;font-weight:bold;">:</div><div class="t" style="left:534.50px;top:432.17px;font-size:9.6px;line-height:9.6px;color:#111111;letter-spacing:1.164px;font-weight:bold;">00</div><div class="t" style="left:549.20px;top:432.37px;font-size:9.6px;line-height:9.6px;color:#333;letter-spacing:0.138px;">(мс)</div>
</body></html>
